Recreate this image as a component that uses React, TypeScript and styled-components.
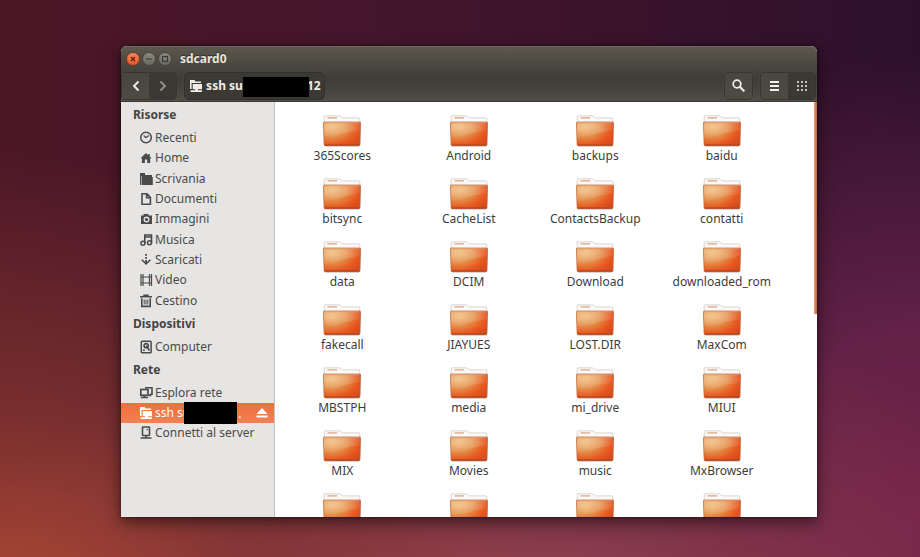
import React from "react";
import styled, { createGlobalStyle, css } from "styled-components";

const GlobalStyle = createGlobalStyle`
  *, *::before, *::after { box-sizing: border-box; }
  html, body { margin: 0; padding: 0; }
  body { font-family: "Noto Sans", "Open Sans", sans-serif; font-size: 12px; color: #3c3c3c; }
  button { font: inherit; color: inherit; border: 0; padding: 0; margin: 0; background: none; }
  ul { list-style: none; margin: 0; padding: 0; }
  svg { display: block; flex: none; }
`;

const Desktop = styled.div`
  display: flex;
  height: 100vh;
  min-height: 320px;
  padding: 46px 103px 40px 121px;
  background:
    radial-gradient(ellipse 60% 85% at 0% 112%, rgba(184, 78, 54, 0.95), rgba(150, 62, 52, 0.6) 45%, transparent 100%),
    radial-gradient(ellipse 62% 62% at 56% 114%, rgba(168, 80, 92, 0.95), rgba(148, 62, 76, 0.55) 50%, transparent 100%),
    radial-gradient(ellipse 42% 82% at 100% 92%, rgba(116, 34, 74, 0.95), rgba(112, 38, 78, 0.8) 40%, transparent 100%),
    linear-gradient(90deg, #4c1726 0%, #43152c 45%, #2d102c 100%);
`;

const Window = styled.main`
  display: flex;
  flex: 1;
  flex-direction: column;
  min-width: 0;
  border-radius: 6px 6px 0 0;
  overflow: hidden;
  background: #fff;
  box-shadow: 0 5px 16px rgba(0, 0, 0, 0.55), 0 0 3px rgba(0, 0, 0, 0.5);
`;

const Header = styled.header`
  flex: none;
  color: #e8e4dc;
  background: linear-gradient(#5c584d 0, #4e4b43 14px, #3e3d38 30px, #45433d 42px, #504e47 55px);
  border-top: 1px solid #6a675c;
  border-bottom: 1px solid #3a3935;
`;

const TitleBar = styled.div`
  display: flex;
  align-items: center;
  gap: 2px;
  height: 24px;
  padding-left: 5px;
`;

const WindowButton = styled.button<{ $close?: boolean }>`
  display: grid;
  place-items: center;
  width: 14px;
  height: 14px;
  border-radius: 50%;
  border: 1px solid #45433c;
  color: #3a3933;
  background: linear-gradient(#8b887e, #6b6961);
  ${(p) => p.$close && css`
    color: #6a2108;
    border-color: #7a3a22;
    background: linear-gradient(#f58560, #e4562a);
  `}
`;

const Title = styled.h1`
  margin: 0 0 0 6px;
  font-size: 12px;
  line-height: 16px;
  font-weight: 700;
  text-shadow: 0 -1px #2c2b28;
`;

const Toolbar = styled.div`
  display: flex;
  align-items: center;
  gap: 7px;
  height: 30px;
  padding: 0 1px 1px 0;
`;

const Group = styled.div`
  display: flex;
  height: 28px;
  border: 1px solid #37362f;
  border-radius: 4px;
  overflow: hidden;
  box-shadow: 0 0 1px rgba(255, 255, 255, 0.2);
`;

const ToolButton = styled.button<{ $pressed?: boolean; $dim?: boolean }>`
  display: grid;
  place-items: center;
  width: 27px;
  color: ${(p) => (p.$dim ? "#96938a" : "#f2f0ea")};
  background: ${(p) => (p.$pressed ? "#3a3933" : "linear-gradient(#484640, #4d4b44)")};
  & + & { border-left: 1px solid #3a3933; }
`;

const PathButton = styled.button`
  display: flex;
  align-items: center;
  height: 28px;
  padding: 0 3px 0 4px;
  border: 1px solid #32312c;
  border-radius: 4px;
  background: #3a3934;
  color: #f0ede6;
  font-weight: 700;
  box-shadow: 0 0 1px rgba(255, 255, 255, 0.2);
`;

const Spacer = styled.div`
  flex: 1;
`;

const Redaction = styled.span<{ $place?: boolean }>`
  position: relative;
  flex: none;
  width: ${(p) => (p.$place ? 53 : 66)}px;
  height: ${(p) => (p.$place ? 22 : 20)}px;
  margin: ${(p) => (p.$place ? "-1px 1px -1px -6px" : "2px -2px 0 0")};
  background: #000;
`;

const Body = styled.div`
  display: flex;
  flex: 1;
  min-height: 0;
`;

const Sidebar = styled.nav`
  flex: none;
  width: 154px;
  overflow: hidden;
  background: #e6e5e4;
  border-right: 1px solid #c4c2c0;
`;

const SectionTitle = styled.h2`
  margin: 0;
  padding-left: 12px;
  font-size: 12px;
  line-height: 26px;
  font-weight: 700;
  color: #444;
`;

const PlaceList = styled.ul<{ $roomy?: boolean }>`
  display: flex;
  flex-direction: column;
  min-height: ${(p) => (p.$roomy ? "183px" : "20px")};
`;

const PlaceItem = styled.li`
  display: flex;
  flex: 1 0 20px;
`;

const PlaceRow = styled.div<{ $selected?: boolean }>`
  display: flex;
  flex: 1;
  align-items: center;
  min-width: 0;
  padding: 0 6px 0 18px;
  color: #4a4a4a;
  ${(p) => p.$selected && css`
    color: #fff;
    background: linear-gradient(#ee6f3e, #f28154);
  `}
`;

const PlaceLink = styled.a`
  display: flex;
  align-items: center;
  gap: 2px;
  color: inherit;
  line-height: 20px;
  white-space: nowrap;
  text-decoration: none;
`;

const Pane = styled.section`
  position: relative;
  flex: 1;
  min-width: 0;
`;

const Scroller = styled.div`
  height: 100%;
  overflow-y: auto;
  scrollbar-width: none;
`;

const FileGrid = styled.ul`
  display: grid;
  grid-template-columns: repeat(4, 1fr);
  grid-auto-rows: 63px;
  padding: 13px 32px 0 4px;
`;

const FileItem = styled.li`
  display: flex;
  justify-content: center;
`;

const FileButton = styled.button`
  display: flex;
  flex-direction: column;
  align-items: center;
  align-self: flex-start;
  line-height: 16px;
  white-space: nowrap;
  gap: 1px;
`;

const ScrollThumb = styled.div`
  position: absolute;
  top: 0;
  right: 0;
  width: 3px;
  height: 51%;
  background: linear-gradient(90deg, #e9a283, #d9774c 60%, #b9683f);
`;

type IconName =
  | "recent" | "home" | "folder" | "document" | "camera" | "music" | "download"
  | "video" | "trash" | "disk" | "network" | "share" | "server";

const glyphs: Record<IconName, React.ReactNode> = {
  recent: (
    <>
      <circle cx="6" cy="6.5" r="5.3" fill="none" stroke="currentColor" strokeWidth="1.5" />
      <path d="M3.600 4.500L6 6.800 8.700 4.500" fill="none" stroke="currentColor" strokeWidth="1.200" />
    </>
  ),
  home: <path d="M6 2L.5 7.200h1.400V12h3V8.600h2.300V12h3V7.200h1.400L9.800 5.400V3H8.200v1.200z" fill="currentColor" />,
  folder: <path d="M0 1h5v2h7v2.400H1.800V4.200H1.200V13H0zM2.500 4h9v.8h-9zM1.800 5h11v8h-11z" fill="currentColor" fillRule="nonzero" />,
  document: (
    <path d="M2 1.700h5l3.400 3.500v7.100H2zM6.600 2v3.600h3.600" fill="none" stroke="currentColor" strokeWidth="1.600" />
  ),
  camera: (
    <>
      <path d="M1 3.500h2.500V2h5v1.500H12V12H1zM6.500 4.600a3 3 0 100 6 3 3 0 000-6z" fill="currentColor" fillRule="evenodd" />
      <circle cx="6.500" cy="7.600" r="1.600" fill="currentColor" />
    </>
  ),
  music: (
    <>
      <path d="M4.800 10.500V2h6.700v8M4.800 4h6.700" fill="none" stroke="currentColor" strokeWidth="1.600" />
      <circle cx="2.900" cy="10.300" r="2" fill="none" stroke="currentColor" strokeWidth="1.500" />
      <circle cx="9.500" cy="9.800" r="2" fill="none" stroke="currentColor" strokeWidth="1.500" />
    </>
  ),
  download: (
    <>
      <path d="M5.200 1H7v1.800H5.200zM5.200 4H7v1.800H5.200zM5.200 7H7v3H5.200z" fill="currentColor" />
      <path d="M1.800 6.800l4.300 4.200 4.300-4.200" fill="none" stroke="currentColor" strokeWidth="1.600" />
    </>
  ),
  video: (
    <path d="M1 1v12M3 1v12M9.500 1v12M11.500 1v12M1 4h10.500M1 10h10.500" fill="none" stroke="currentColor" strokeWidth="1.200" />
  ),
  trash: (
    <>
      <path d="M0 2.700h12M4 2V1.200h4V2M1.800 4.200v8.200h8.400V4.200" fill="none" stroke="currentColor" strokeWidth="1.600" />
      <path d="M4.200 5.500v5M6 5.500v5M7.800 5.500v5" fill="none" stroke="currentColor" strokeWidth="1" />
    </>
  ),
  disk: (
    <>
      <rect x="1.300" y="1.200" width="9.800" height="11.500" rx=".8" fill="none" stroke="currentColor" strokeWidth="1.500" />
      <circle cx="6.200" cy="5.700" r="2.100" fill="none" stroke="currentColor" strokeWidth="1.600" />
      <path d="M6.200 5.700l3.300 4.800" stroke="currentColor" strokeWidth="1.600" />
      <path d="M2.900 9.500h2V11h-2z" fill="currentColor" />
    </>
  ),
  network: (
    <>
      <path d="M5.800 2.500V1.700h6.200v6.500H10" fill="none" stroke="currentColor" strokeWidth="1.600" />
      <rect x=".8" y="3.500" width="7.200" height="5.800" fill="none" stroke="currentColor" strokeWidth="1.700" />
      <path d="M3.400 9.500h2v1.300H8v1.500H.8v-1.500h2.600zM9.800 8h1.500v2.300H9V9z" fill="currentColor" />
    </>
  ),
  share: (
    <>
      <path d="M0 1h4.500l1 1.500H11v1.400H1.600V10H0z" fill="currentColor" />
      <path d="M2.700 5H12v5.200H8v1.100h4V13H.6v-1.700h4.600v-1.100H2.700z" fill="currentColor" />
    </>
  ),
  server: (
    <>
      <rect x="2.500" y="1" width="7" height="8.500" rx=".6" fill="none" stroke="currentColor" strokeWidth="1.600" />
      <path d="M5.200 9.500h1.600V12H5.200zM.5 11.200h11v1.600H.5zM6.600 3H8v1.300H6.600z" fill="currentColor" />
    </>
  ),
};

const PlaceIcon = ({ name }: { name: IconName }) => (
  <svg width="14" height="14" viewBox="-1 0 14 14" aria-hidden="true">{glyphs[name]}</svg>
);

const FolderArt = () => (
  <svg width="38" height="32" viewBox="0 0 38 32" aria-hidden="true">
    <path d="M1.200 11V1.600q0-.8.8-.8h14q.8 0 1.400.6l1.500 1.100q.4.400 1.200.400H36q.8 0 .8.900V11z" fill="#fbf9f7" stroke="#cfcac6" strokeWidth=".8" />
    <path d="M4.500 2.900h9.500" stroke="#dba180" strokeWidth="1.200" />
    <path d="M.4 8q0-1 1-1h35.200q1 0 1 1l-.6 21.500q0 1.200-1.200 1.200H2.300q-1.200 0-1.200-1.200z" fill="url(#folder-base)" stroke="#b9673f" strokeWidth=".7" />
    <path d="M.9 7.500h36.200l-.4 8Q24 17 15 20.500 8 23 1.200 22.500z" fill="url(#folder-shine)" />
    <path d="M1.500 7.800h35" stroke="#e0a880" strokeWidth=".7" />
    <path d="M1.600 30h34.800" stroke="#a8421c" strokeWidth="1" />
    <path d="M2 31.400h34" stroke="#000" strokeOpacity=".15" strokeWidth=".8" />
  </svg>
);

const FolderDefs = () => (
  <svg width="0" height="0" aria-hidden="true">
    <defs>
      <radialGradient id="folder-base" cx=".22" cy=".25" r=".9">
        <stop offset="0" stopColor="#ecab68" />
        <stop offset=".45" stopColor="#e38a46" />
        <stop offset=".78" stopColor="#e8581f" />
        <stop offset="1" stopColor="#d94c1c" />
      </radialGradient>
      <radialGradient id="folder-shine" cx=".28" cy=".2" r=".8">
        <stop offset="0" stopColor="#fff0c8" stopOpacity=".42" />
        <stop offset="1" stopColor="#fff" stopOpacity=".04" />
      </radialGradient>
    </defs>
  </svg>
);

const resources: { icon: IconName; label: string }[] = [
  { icon: "recent", label: "Recenti" },
  { icon: "home", label: "Home" },
  { icon: "folder", label: "Scrivania" },
  { icon: "document", label: "Documenti" },
  { icon: "camera", label: "Immagini" },
  { icon: "music", label: "Musica" },
  { icon: "download", label: "Scaricati" },
  { icon: "video", label: "Video" },
  { icon: "trash", label: "Cestino" },
];

const files = [
  "365Scores", "Android", "backups", "baidu",
  "bitsync", "CacheList", "ContactsBackup", "contatti",
  "data", "DCIM", "Download", "downloaded_rom",
  "fakecall", "JIAYUES", "LOST.DIR", "MaxCom",
  "MBSTPH", "media", "mi_drive", "MIUI",
  "MIX", "Movies", "music", "MxBrowser",
];

const Place = ({ icon, label }: { icon: IconName; label: string }) => (
  <PlaceItem>
    <PlaceRow>
      <PlaceLink href="#"><PlaceIcon name={icon} />{label}</PlaceLink>
    </PlaceRow>
  </PlaceItem>
);

export default function App() {
  return (
    <>
      <GlobalStyle />
      <Desktop>
        <Window>
          <Header>
            <TitleBar>
              <WindowButton $close aria-label="Chiudi">
                <svg width="8" height="8" viewBox="0 0 8 8"><path d="M2 2l4 4M6 2L2 6" stroke="currentColor" strokeWidth="1.200" /></svg>
              </WindowButton>
              <WindowButton aria-label="Riduci">
                <svg width="8" height="8" viewBox="0 0 8 8"><path d="M1 4h6" stroke="currentColor" strokeWidth="1.200" /></svg>
              </WindowButton>
              <WindowButton aria-label="Ingrandisci">
                <svg width="8" height="8" viewBox="0 0 8 8"><rect x="1.500" y="1.500" width="5" height="5" fill="none" stroke="currentColor" strokeWidth="1.100" /></svg>
              </WindowButton>
              <Title>sdcard0</Title>
            </TitleBar>
            <Toolbar>
              <Group>
                <ToolButton aria-label="Indietro">
                  <svg width="12" height="12" viewBox="0 0 12 12"><path d="M8.500 1.500L4 6l4.500 4.500" fill="none" stroke="currentColor" strokeWidth="1.800" /></svg>
                </ToolButton>
                <ToolButton aria-label="Avanti" $dim $pressed>
                  <svg width="12" height="12" viewBox="0 0 12 12"><path d="M3.500 1.500L8 6l-4.500 4.500" fill="none" stroke="currentColor" strokeWidth="1.800" /></svg>
                </ToolButton>
              </Group>
              <PathButton>
                <PlaceIcon name="share" />
                <span>&nbsp;ssh su</span>
                <Redaction />
                <span>12</span>
              </PathButton>
              <Spacer />
              <Group>
                <ToolButton aria-label="Cerca">
                  <svg width="13" height="13" viewBox="0 0 12 12"><circle cx="4.600" cy="4.600" r="3.500" fill="none" stroke="currentColor" strokeWidth="1.600" /><path d="M7.200 7.200l4.200 4.200" stroke="currentColor" strokeWidth="2.100" /></svg>
                </ToolButton>
              </Group>
              <Group>
                <ToolButton aria-label="Vista elenco">
                  <svg width="9" height="10" viewBox="0 0 9 10"><path d="M0 1h9M0 5h9M0 9h9" stroke="currentColor" strokeWidth="2" /></svg>
                </ToolButton>
                <ToolButton aria-label="Vista griglia" $pressed>
                  <svg width="10" height="10" viewBox="0 0 10 10"><path d="M0 1h10M0 5h10M0 9h10" stroke="currentColor" strokeWidth="1.700" strokeDasharray="2 2" /></svg>
                </ToolButton>
              </Group>
            </Toolbar>
          </Header>
          <Body>
            <Sidebar aria-label="Risorse">
              <SectionTitle>Risorse</SectionTitle>
              <PlaceList $roomy>
                {resources.map((r) => <Place key={r.label} {...r} />)}
              </PlaceList>
              <SectionTitle>Dispositivi</SectionTitle>
              <PlaceList>
                <Place icon="disk" label="Computer" />
              </PlaceList>
              <SectionTitle>Rete</SectionTitle>
              <PlaceList>
                <Place icon="network" label="Esplora rete" />
                <PlaceItem>
                  <PlaceRow $selected>
                    <PlaceLink href="#" aria-current="page">
                      <PlaceIcon name="share" />
                      ssh su
                    </PlaceLink>
                    <Redaction $place />
                    <span>.</span>
                    <Spacer />
                    <button aria-label="Espelli">
                      <svg width="12" height="12" viewBox="0 0 12 12"><path d="M6 1l5.500 6H.5zM.5 8.500h11v2H.5z" fill="currentColor" /></svg>
                    </button>
                  </PlaceRow>
                </PlaceItem>
                <Place icon="server" label="Connetti al server" />
              </PlaceList>
            </Sidebar>
            <Pane aria-label="sdcard0">
              <FolderDefs />
              <Scroller>
                <FileGrid>
                  {files.map((name) => (
                    <FileItem key={name}>
                      <FileButton><FolderArt />{name}</FileButton>
                    </FileItem>
                  ))}
                  {[0, 1, 2, 3].map((n) => (
                    <FileItem key={n}>
                      <FileButton aria-label="Cartella"><FolderArt /></FileButton>
                    </FileItem>
                  ))}
                </FileGrid>
              </Scroller>
              <ScrollThumb />
            </Pane>
          </Body>
        </Window>
      </Desktop>
    </>
  );
}
